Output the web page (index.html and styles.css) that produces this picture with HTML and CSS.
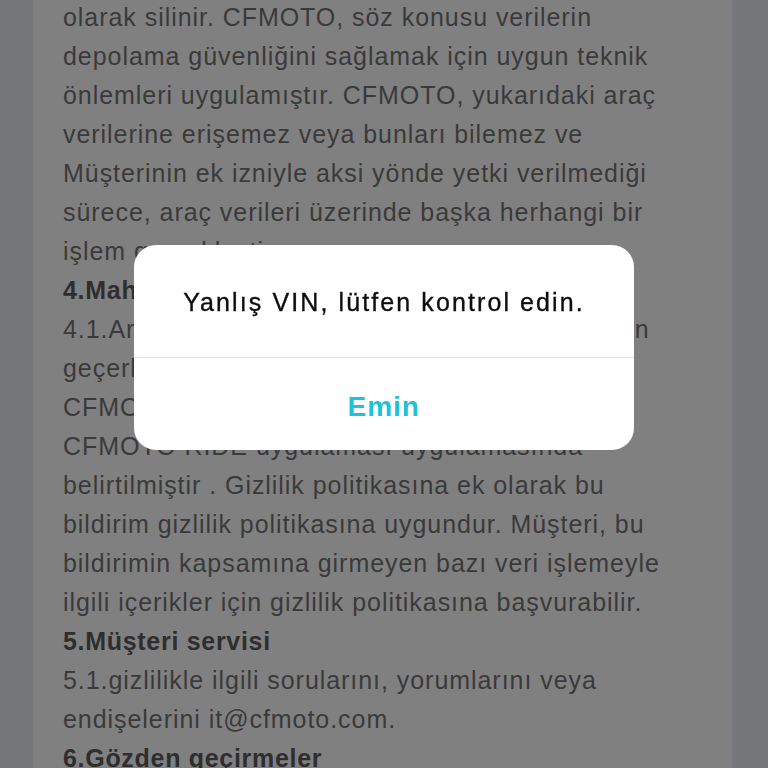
FILE: index.html
```html
<!DOCTYPE html>
<html lang="tr">
<head>
<meta charset="utf-8">
<title>Gizlilik bildirimi</title>
<link rel="stylesheet" href="styles.css">
</head>
<body>
<div class="screen">
  <main class="doc">
    <p class="para">olarak silinir. CFMOTO, söz konusu verilerin<br>depolama güvenliğini sağlamak için uygun teknik<br>önlemleri uygulamıştır. CFMOTO, yukarıdaki araç<br>verilerine erişemez veya bunları bilemez ve<br>Müşterinin ek izniyle aksi yönde yetki verilmediği<br>sürece, araç verileri üzerinde başka herhangi bir<br>işlem gerçekleştiremez.</p>
    <h3 class="head">4.Mahremiyet ve diğer bildirimler</h3>
    <p class="para">4.1.Araç verileri bildirimi, tümüyle araç verilerinin<br>geçerli olan kurallar hakkında bilgi vermek için<br>CFMOTO tarafından hazırlanmıştır ve ayrıca<br>CFMOTO RIDE uygulaması uygulamasında<br>belirtilmiştir . Gizlilik politikasına ek olarak bu<br>bildirim gizlilik politikasına uygundur. Müşteri, bu<br>bildirimin kapsamına girmeyen bazı veri işlemeyle<br>ilgili içerikler için gizlilik politikasına başvurabilir.</p>
    <h3 class="head">5.Müşteri servisi</h3>
    <p class="para">5.1.gizlilikle ilgili sorularını, yorumlarını veya<br>endişelerini it@cfmoto.com.</p>
    <h3 class="head">6.Gözden geçirmeler</h3>
  </main>
</div>
<div class="alert" role="alertdialog">
  <div class="alert-msg">Yanlış VIN, lütfen kontrol edin.</div>
  <div class="alert-btn">Emin</div>
</div>
</body>
</html>
```
FILE: styles.css
```css
html, body {
  margin: 0;
  padding: 0;
  height: 100%;
  overflow: hidden;
}
body {
  background: #76777a;
  font-family: "Liberation Sans", Arial, sans-serif;
}
.screen {
  margin-left: 33px;
  width: 699px;
  height: 768px;
  background: #808080;
  overflow: hidden;
}
.doc {
  margin-top: -2px;
  padding-left: 30px;
  font-size: 25px;
  line-height: 39px;
  letter-spacing: 0.95px;
  color: #3a3a3a;
  white-space: nowrap;
}
.para {
  margin: 0;
}
.head {
  margin: 0;
  font-size: 25px;
  font-weight: bold;
  letter-spacing: 0.7px;
  color: #2e2e2e;
}
.alert {
  position: fixed;
  left: 134px;
  top: 245px;
  width: 500px;
  height: 205px;
  background: #fff;
  border-radius: 22px;
  display: flex;
  flex-direction: column;
  overflow: hidden;
}
.alert-msg {
  height: 113px;
  display: flex;
  align-items: center;
  justify-content: center;
  font-size: 25px;
  letter-spacing: 2.1px;
  color: #0d0d0d;
  -webkit-text-stroke: 0.35px #0d0d0d;
  border-bottom: 1px solid #e2e2e2;
  box-sizing: border-box;
  padding-top: 2px;
  white-space: nowrap;
}
.alert-btn {
  flex: 1;
  display: flex;
  align-items: center;
  justify-content: center;
  padding-top: 6px;
  font-size: 28px;
  font-weight: bold;
  letter-spacing: 1px;
  color: #1ec3d9;
}
```
